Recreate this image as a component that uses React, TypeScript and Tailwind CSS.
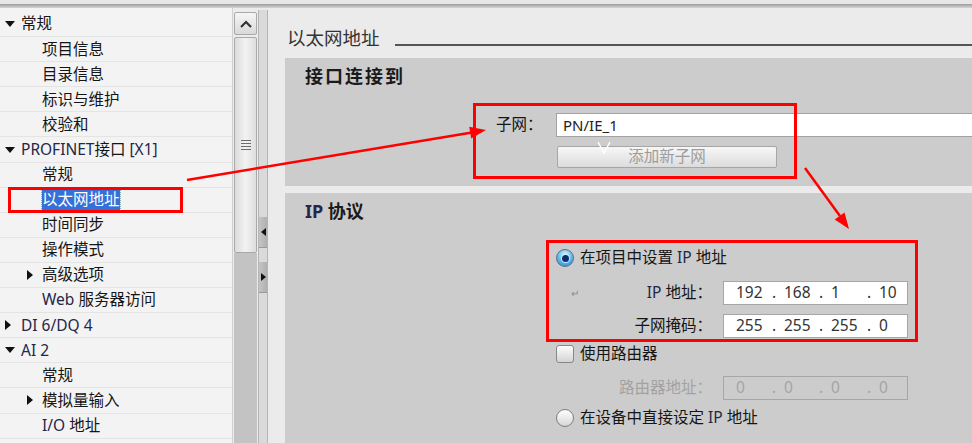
import React from 'react';

type Row = { t: React.ReactNode; lvl: 0 | 1; arrow?: 'down' | 'right'; sel?: boolean };

const L = ({ children }: { children: React.ReactNode }) => <span className="text-[#262648]">{children}</span>;

const rows: Row[] = [
  { t: '常规', lvl: 0, arrow: 'down' },
  { t: '项目信息', lvl: 1 },
  { t: '目录信息', lvl: 1 },
  { t: '标识与维护', lvl: 1 },
  { t: '校验和', lvl: 1 },
  { t: <><L>PROFINET</L>接口 <L>[X1]</L></>, lvl: 0, arrow: 'down' },
  { t: '常规', lvl: 1 },
  { t: '以太网地址', lvl: 1, sel: true },
  { t: '时间同步', lvl: 1 },
  { t: '操作模式', lvl: 1 },
  { t: '高级选项', lvl: 1, arrow: 'right' },
  { t: <><L>Web</L> 服务器访问</>, lvl: 1 },
  { t: <L>DI 6/DQ 4</L>, lvl: 0, arrow: 'right' },
  { t: <L>AI 2</L>, lvl: 0, arrow: 'down' },
  { t: '常规', lvl: 1 },
  { t: '模拟量输入', lvl: 1, arrow: 'right' },
  { t: <><L>I/O</L> 地址</>, lvl: 1 },
];

const Down = () => (
  <svg width="10" height="6" viewBox="0 0 10 6"><path d="M0 0H10L5 6Z" fill="#111" /></svg>
);
const Right = () => (
  <svg width="6" height="10" viewBox="0 0 6 10"><path d="M0 0V10L6 5Z" fill="#111" /></svg>
);

function TreeRow({ r }: { r: Row }) {
  const arrow = r.arrow === 'down' ? <Down /> : r.arrow === 'right' ? <Right /> : null;
  return (
    <div className="h-[25.1px] flex items-center border-b border-[#e4e4e4]">
      {r.lvl === 0 ? (
        <div className="w-[21px] pl-[5px] flex items-center">{arrow}</div>
      ) : (
        <div className="w-[42px] pl-[27px] flex items-center">{arrow}</div>
      )}
      {r.sel ? (
        <span className="bg-[#3470d8] text-white outline-1 outline-dotted outline-[#8aa] leading-[21px] px-[0px]">{r.t}</span>
      ) : (
        <span className="text-[#151515]">{r.t}</span>
      )}
    </div>
  );
}

function Radio({ checked }: { checked?: boolean }) {
  return checked ? (
    <div className="w-[18px] h-[18px] rounded-full border border-[#5d6f82] bg-[radial-gradient(circle_at_50%_30%,#e2f6ff_0%,#6cc2f0_45%,#1e80cc_100%)] flex items-center justify-center">
      <div className="w-[7px] h-[7px] rounded-full bg-[#0b2f6e] ring-1 ring-[#cfe8ff]" />
    </div>
  ) : (
    <div className="w-[18px] h-[18px] rounded-full border border-[#7e7e7e] bg-gradient-to-b from-[#ffffff] to-[#d6d6d6]" />
  );
}

function IpField({ vals, disabled }: { vals: string[]; disabled?: boolean }) {
  const widths = ['w-[48px]', 'w-[47px]', 'w-[48px]', 'flex-1'];
  return (
    <div
      className={`w-[185px] h-[24px] border flex items-center text-[15.5px] ${
        disabled ? 'border-[#a6a6a6] text-[#a4a4a4] bg-[#cccccc]' : 'border-[#a6a6a6] bg-white text-[#333]'
      }`}
    >
      {vals.map((v, i) => (
        <div key={i} className={`${widths[i]} flex items-center`}>
          <span className="w-[12px] text-left leading-none">{i === 0 ? '' : '.'}</span>
          <span className="leading-none">{v}</span>
        </div>
      ))}
    </div>
  );
}

export default function App() {
  return (
    <div className="w-[972px] h-[443px] relative overflow-hidden bg-[#ebebeb] font-['Noto_Sans','Noto_Sans_CJK_SC',sans-serif] text-[15.5px] text-[#151515]">
      {/* top strip */}
      <div className="h-[4px] bg-[#e6e6e6]" />
      <div className="h-[4px] bg-gradient-to-b from-[#9c9c9c] to-[#d6d6d6]" />

      <div className="flex h-[435px]">
        {/* tree */}
        <div className="w-[232px] bg-[#f3f3f3] pt-[4px] shrink-0">
          {rows.map((r, i) => (
            <TreeRow key={i} r={r} />
          ))}
        </div>

        {/* scrollbar */}
        <div className="w-[26px] shrink-0 pt-[4px] flex flex-col bg-[#ececec] border-l border-[#d0d0d0]">
          <div className="mx-[1px] h-[23px] border border-[#a9a9a9] rounded-[2px] bg-gradient-to-b from-[#f6f6f6] to-[#d9d9d9] flex items-center justify-center">
            <svg width="12" height="8" viewBox="0 0 12 8"><path d="M1 7L6 2L11 7" stroke="#333" strokeWidth="2.2" fill="none" /></svg>
          </div>
          <div className="mx-[1px] mt-[2px] h-[216px] border border-[#a9a9a9] rounded-[2px] bg-gradient-to-r from-[#dcdcdc] via-[#f2f2f2] to-[#dedede] flex items-center justify-center">
            <div className="flex flex-col gap-[2px]">
              <div className="w-[10px] h-[1px] bg-[#6a6a6a]" />
              <div className="w-[10px] h-[1px] bg-[#6a6a6a]" />
              <div className="w-[10px] h-[1px] bg-[#6a6a6a]" />
              <div className="w-[10px] h-[1px] bg-[#6a6a6a]" />
            </div>
          </div>
          <div className="mx-[1px] flex-1 bg-[#c3c3c3]" />
        </div>

        {/* splitter */}
        <div className="w-[10px] shrink-0 mt-[2px] bg-[#dadada] border-x border-[#b4b4b4] flex flex-col">
          <div className="mt-[207px] h-[31px] bg-gradient-to-r from-[#c4c4c4] to-[#b0b0b0] border-b border-[#9a9a9a] flex items-center justify-center">
            <svg width="5" height="8" viewBox="0 0 5 8"><path d="M5 0V8L0 4Z" fill="#111" /></svg>
          </div>
          <div className="mt-[14px] h-[31px] bg-gradient-to-r from-[#c4c4c4] to-[#b0b0b0] border-b border-[#9a9a9a] flex items-center justify-center">
            <svg width="5" height="8" viewBox="0 0 5 8"><path d="M0 0V8L5 4Z" fill="#111" /></svg>
          </div>
        </div>

        {/* content */}
        <div className="flex-1 pl-[17px] flex flex-col">
          <div className="h-[50px] pt-[19px] flex items-start">
            <div className="h-[22px] flex items-center pl-[2px] text-[18.5px] text-[#333] whitespace-nowrap">以太网地址</div>
            <div className="flex-1 ml-[15px] h-[19px] border-b-2 border-[#555]" />
          </div>

          <div className="h-[128px] bg-[#cccccc] flex flex-col">
            <div className="h-[36px] pl-[20px] flex items-center font-bold text-[18px] tracking-[2px] text-[#1a1a1a]">接口连接到</div>
            <div className="mt-[19px] h-[24px] flex items-center pl-[211px]">
              <div className="w-[60px]">子网：</div>
              <div className="flex-1 -mr-[8px] h-[24px] bg-white border border-[#a2a2a2] flex items-center pl-[6px] text-[15px] text-[#222]">PN/IE_1</div>
            </div>
            <div className="mt-[9px] ml-[272px] w-[220px] h-[22px] border border-[#a6a6a6] rounded-[2px] bg-gradient-to-b from-[#f7f7f7] to-[#dcdcdc] flex items-center justify-center text-[#9c9c9c]">
              添加新子网
            </div>
          </div>

          <div className="h-[7px]" />

          <div className="flex-1 bg-[#cccccc] flex flex-col">
            <div className="h-[36px] pl-[20px] flex items-center font-bold text-[18px] text-[#1a1a1a]">
              <span className="text-[#262648]">IP</span>&nbsp;协议
            </div>

            <div className="pl-[271px] flex flex-col">
              <div className="mt-[17px] h-[24px] flex items-center">
                <Radio checked />
                <span className="ml-[6px]">在项目中设置 <L>IP</L> 地址</span>
              </div>

              <div className="mt-[11px] h-[24px] flex items-center">
                <div className="w-[167px] flex items-center pr-[11px]">
                  <span className="ml-[15px] text-[10px] text-[#8a8a8a]">↵</span>
                  <span className="flex-1 text-right"><L>IP</L> 地址：</span>
                </div>
                <IpField vals={['192', '168', '1', '10']} />
              </div>

              <div className="mt-[9px] h-[24px] flex items-center">
                <div className="w-[167px] pr-[11px] text-right">子网掩码：</div>
                <IpField vals={['255', '255', '255', '0']} />
              </div>

              <div className="mt-[4px] h-[24px] flex items-center">
                <div className="w-[18px] h-[18px] rounded-[3px] border border-[#878787] bg-gradient-to-b from-[#fdfdfd] to-[#d4d4d4]" />
                <span className="ml-[6px]">使用路由器</span>
              </div>

              <div className="mt-[10px] h-[24px] flex items-center">
                <div className="w-[167px] pr-[11px] text-right text-[#a2a2a2]">路由器地址：</div>
                <IpField vals={['0', '0', '0', '0']} disabled />
              </div>

              <div className="mt-[6px] h-[24px] flex items-center">
                <Radio />
                <span className="ml-[6px]">在设备中直接设定 <L>IP</L> 地址</span>
              </div>
            </div>
          </div>
        </div>
      </div>

      {/* annotations */}
      <svg className="absolute inset-0 pointer-events-none" width="972" height="443" viewBox="0 0 972 443">
        <rect x="9.5" y="188.5" width="172" height="23" fill="none" stroke="#ff0000" strokeWidth="3" />
        <rect x="474.5" y="104.5" width="321" height="73" fill="none" stroke="#ff0000" strokeWidth="3" />
        <rect x="547.5" y="241.5" width="369" height="99" fill="none" stroke="#ff0000" strokeWidth="3" />
        <line x1="187" y1="180" x2="472" y2="132.4" stroke="#ff0000" strokeWidth="2.5" />
        <polygon points="486,130 471.2,138.5 469.2,126.7" fill="#ff0000" />
        <line x1="805" y1="168" x2="840" y2="216" stroke="#ff0000" strokeWidth="2.5" />
        <polygon points="849,229 844.5,212.5 834.7,219.5" fill="#ff0000" />
        <polyline points="598,142 604,153 610,142" fill="none" stroke="#ffffff" strokeWidth="1.5" />
      </svg>
    </div>
  );
}
